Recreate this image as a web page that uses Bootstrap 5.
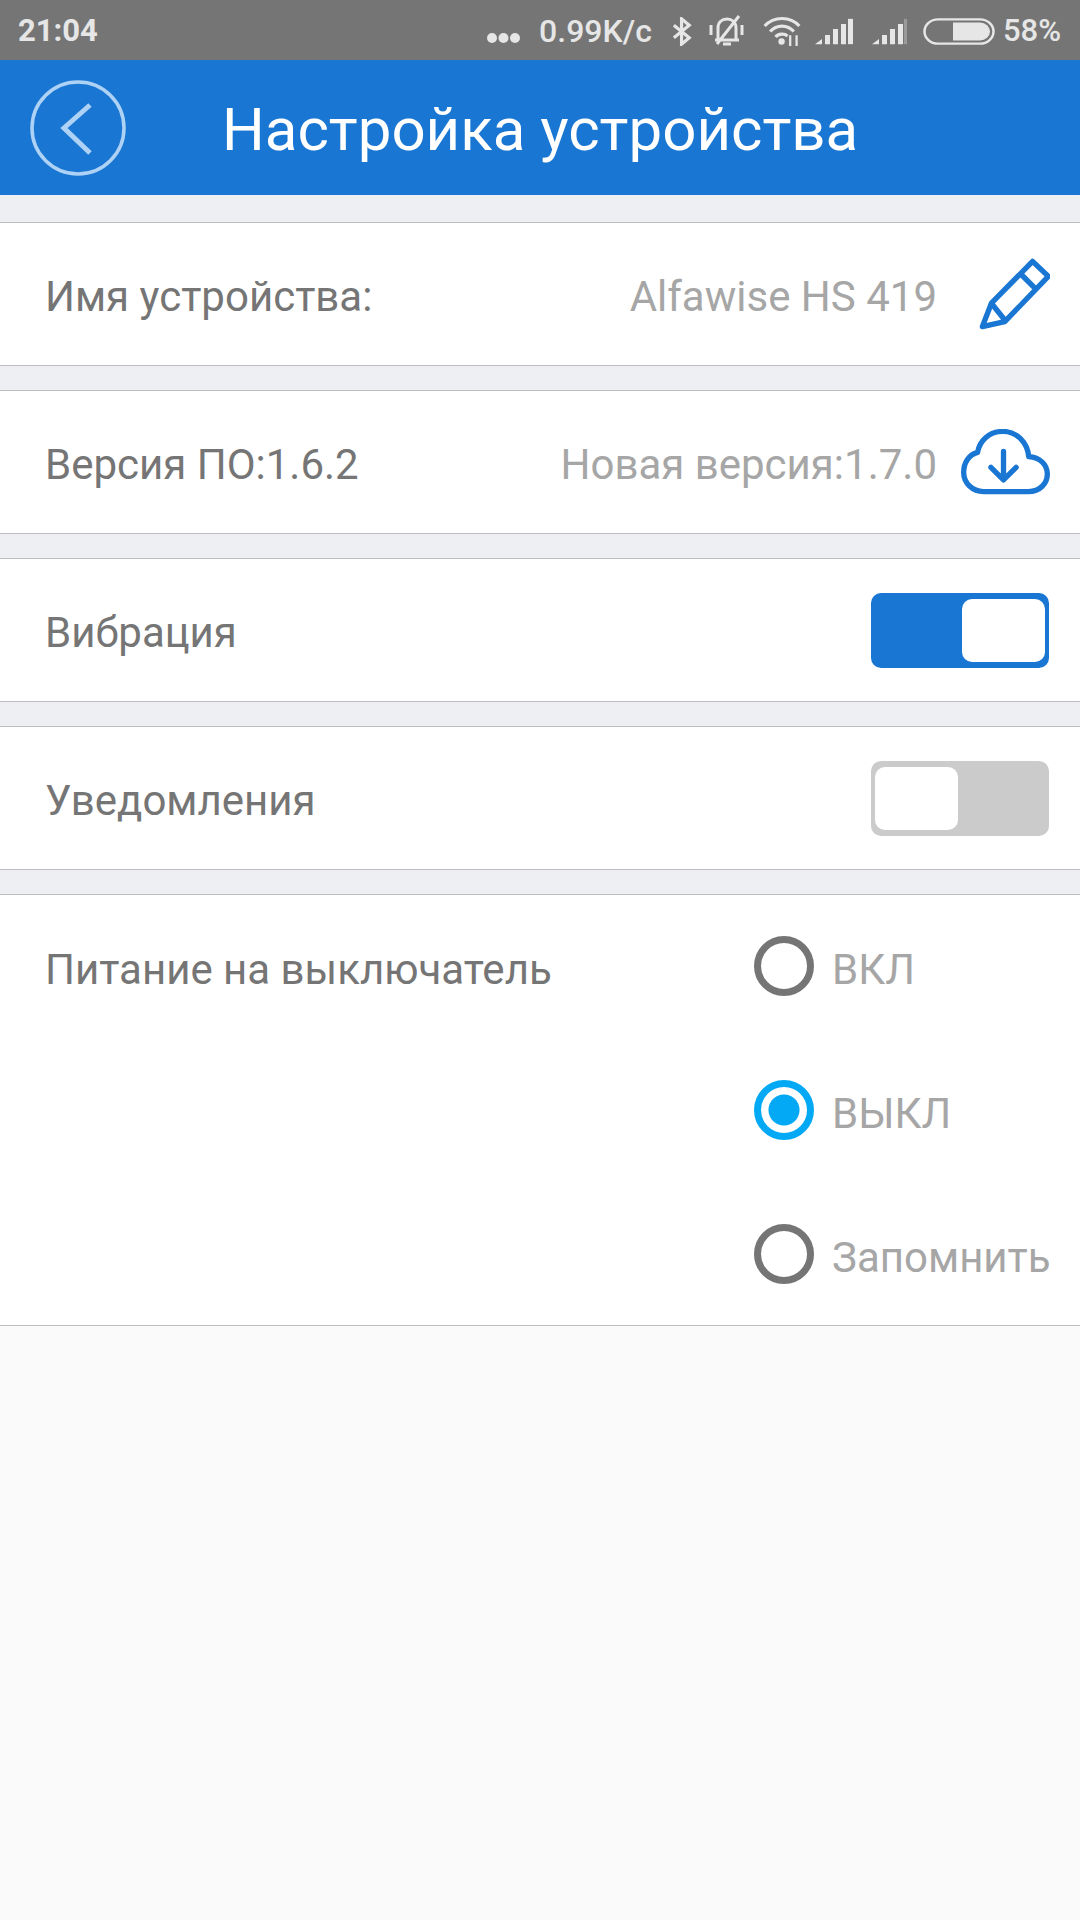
<!DOCTYPE html>
<html lang="ru">
<head>
  <meta charset="UTF-8" />
  <title>Настройка устройства</title>
  <link href="https://cdn.jsdelivr.net/npm/bootstrap@5.3.3/dist/css/bootstrap.min.css" rel="stylesheet" />
  <style>
    body {
      background: #fafafa;
      font-family: Roboto, "Liberation Sans", sans-serif;
      min-height: 1920px;
    }
    .status-bar {
      height: 60px;
      background: #757575;
      color: #e6e6e6;
      font-size: 31px;
      font-weight: 500;
      padding: 2px 19px 0 18px;
    }
    .status-time { font-weight: 700; }
    .status-right svg { display: block; }
    .status-dots { margin-top: 14px; }
    .status-speed { font-size: 32px; margin-left: 19px; margin-right: 19px; }
    .status-gap { margin-left: 16px; }
    .status-gap-sm { margin-left: 12px; }
    .status-gap-lg { margin-left: 19px; }
    .app-bar {
      height: 135px;
      background: #1976d2;
      padding-left: 30px;
    }
    .back-btn {
      background: none;
      border: 0;
      padding: 0;
      width: 96px;
      height: 96px;
      line-height: 0;
    }
    .app-title {
      color: #fff;
      font-size: 60px;
      font-weight: 400;
      margin: 0 0 0 96px;
      padding-top: 5px;
    }
    .settings-list { background: #eeeff3; padding-top: 27px; }
    .setting-row {
      height: 144px;
      background: #fff;
      border-top: 1px solid #bdbdbd;
      border-bottom: 1px solid #bdbdbd;
      margin-bottom: 24px;
      padding: 0 30px 0 45px;
      font-size: 42px;
    }
    .setting-label { color: #757575; padding-top: 5px; }
    .setting-value { color: #a6a6a6; padding-top: 5px; }
    .icon-slot { width: 89px; margin-left: 24px; }
    .dev-toggle {
      width: 178px;
      height: 75px;
      border: 0;
      border-radius: 10px;
      padding: 6px 4px;
      margin-right: 1px;
      background: #cbcbcb;
    }
    .dev-toggle.is-on { background: #1976d2; }
    .toggle-knob {
      display: block;
      width: 83px;
      height: 63px;
      background: #fff;
      border-radius: 10px;
    }
    .power-row {
      height: 432px;
      padding: 0 30px 0 45px;
      background: #fff;
      border-top: 1px solid #bdbdbd;
      border-bottom: 1px solid #bdbdbd;
      font-size: 42px;
    }
    .power-row .power-label { padding-top: 43px; }
    .power-options { width: 296px; padding-top: 41px; gap: 84px; }
    .power-option { height: 60px; gap: 18px; padding: 0; margin: 0; min-height: 0; }
    .power-option .form-check-input {
      float: none;
      flex: none;
      width: 60px;
      height: 60px;
      margin: 0;
      border: 7px solid #757575;
      background-color: #fff;
      background-image: none;
    }
    .power-option .form-check-input:checked {
      border-color: #03a9f4;
      background-image: radial-gradient(circle, #03a9f4 15px, #fff 16px);
    }
    .power-option .form-check-label { color: #a6a6a6; padding-top: 7px; }
  </style>
</head>
<body>
  <!-- status bar -->
  <div class="status-bar d-flex align-items-center justify-content-between">
    <span class="status-time">21:04</span>
    <div class="d-flex align-items-center status-right">
      <svg class="status-dots" width="33" height="12" viewBox="0 0 33 12" fill="#e6e6e6"><circle cx="5" cy="6" r="5"/><circle cx="16.500" cy="6" r="5"/><circle cx="28" cy="6" r="5"/></svg>
      <span class="status-speed">0.99K/с</span>
      <svg width="22" height="29" viewBox="0 0 22 32" fill="none" stroke="#e6e6e6" stroke-width="3.500"><path d="M2 9 19 23 10.500 30V2L19 9 2 23"/></svg>
      <svg class="status-gap" width="36" height="36" viewBox="0 0 36 36" fill="none" stroke="#e6e6e6" stroke-width="3"><path d="M9 27V15C9 9 13 6 18 6s9 3 9 9v12zM6 27H30M14 31h8M2 12v10M33 12v10M30 3 8 31"/></svg>
      <svg class="status-gap" width="42" height="31" viewBox="0 0 42 34" fill="none" stroke="#e6e6e6" stroke-width="3.500"><path d="M2 11C12 0 30 0 40 11M8 17C15 9 27 9 34 17M14 23C17 19 24 19 27 22"/><circle cx="20.500" cy="28" r="3.500" fill="#e6e6e6" stroke="none"/><path stroke-width="2.500" d="M30 21V33M37 21V33"/></svg>
      <svg class="status-gap-sm" width="38" height="27" viewBox="0 0 38 32" preserveAspectRatio="none" fill="#e6e6e6"><path d="M0 31 7 25V31zM10 20h5V31h-5zM18 13h5V31h-5zM26 7h5V31h-5z"/><path d="M33 1h5V31h-5z"/></svg>
      <svg class="status-gap-lg" width="35" height="27" viewBox="0 0 35 32" preserveAspectRatio="none" fill="#e6e6e6"><path d="M0 31 7 25V31zM10 20h5V31h-5zM18 13h5V31h-5zM26 7h5V31h-5z"/><path fill="#9a9a9a" d="M32 1h3V31h-3z"/></svg>
      <svg class="status-gap" width="72" height="27" viewBox="0 0 72 30" preserveAspectRatio="none"><rect x="1.500" y="1.500" width="69" height="27" rx="13.500" fill="none" stroke="#e6e6e6" stroke-width="2.500"/><path fill="#e6e6e6" d="M30 5H57a10 10 0 0 1 0 20H30z"/></svg>
      <span class="ms-2">58%</span>
    </div>
  </div>

  <!-- app bar -->
  <header class="app-bar d-flex align-items-center">
    <button class="back-btn" type="button" aria-label="Назад">
      <svg width="96" height="96" viewBox="0 0 96 96" fill="none" stroke="#aed2f6"><circle cx="48" cy="48" r="46" stroke-width="3.500"/><path d="M60 25 34 48 60 73" stroke-width="5"/></svg>
    </button>
    <h1 class="app-title">Настройка устройства</h1>
  </header>

  <main class="settings-list">
    <div class="setting-row d-flex align-items-center justify-content-between">
      <span class="setting-label">Имя устройства:</span>
      <div class="d-flex align-items-center">
        <span class="setting-value">Alfawise HS 419</span>
        <div class="icon-slot d-flex justify-content-end">
          <svg width="72" height="72" viewBox="415 145 215 215" fill="none" stroke="#1976d2" stroke-width="16" stroke-linejoin="round"><path d="M428 350 455 280 578 155 625 200 495 335zM455 280 495 330M545 195 590 240"/></svg>
        </div>
      </div>
    </div>

    <div class="setting-row d-flex align-items-center justify-content-between">
      <span class="setting-label">Версия ПО:1.6.2</span>
      <div class="d-flex align-items-center">
        <span class="setting-value">Новая версия:1.7.0</span>
        <div class="icon-slot d-flex justify-content-end">
          <svg width="89" height="66" viewBox="362 655 268 198" fill="none" stroke="#1976d2" stroke-width="16" stroke-linecap="round" stroke-linejoin="round"><path d="M430 843H565C600 843 622 818 622 790 622 762 600 740 566 738 562 695 530 662 488 662 447 662 418 690 412 725 385 732 370 757 370 785 370 818 397 843 430 843Z"/><path d="M490 722V805M452 770 490 808 528 770"/></svg>
        </div>
      </div>
    </div>

    <div class="setting-row d-flex align-items-center justify-content-between">
      <span class="setting-label">Вибрация</span>
      <button class="dev-toggle is-on d-flex justify-content-end" type="button" aria-label="Вибрация"><span class="toggle-knob"></span></button>
    </div>

    <div class="setting-row d-flex align-items-center justify-content-between">
      <span class="setting-label">Уведомления</span>
      <button class="dev-toggle d-flex" type="button" aria-label="Уведомления"><span class="toggle-knob"></span></button>
    </div>

    <div class="power-row d-flex justify-content-between">
      <span class="setting-label power-label">Питание на выключатель</span>
      <div class="power-options d-flex flex-column">
        <div class="form-check power-option d-flex align-items-center">
          <input class="form-check-input" type="radio" name="power" id="powerOn" />
          <label class="form-check-label" for="powerOn">ВКЛ</label>
        </div>
        <div class="form-check power-option d-flex align-items-center">
          <input class="form-check-input" type="radio" name="power" id="powerOff" checked />
          <label class="form-check-label" for="powerOff">ВЫКЛ</label>
        </div>
        <div class="form-check power-option d-flex align-items-center">
          <input class="form-check-input" type="radio" name="power" id="powerLast" />
          <label class="form-check-label" for="powerLast">Запомнить</label>
        </div>
      </div>
    </div>
  </main>

  <script src="https://cdn.jsdelivr.net/npm/bootstrap@5.3.3/dist/js/bootstrap.bundle.min.js"></script>
</body>
</html>
